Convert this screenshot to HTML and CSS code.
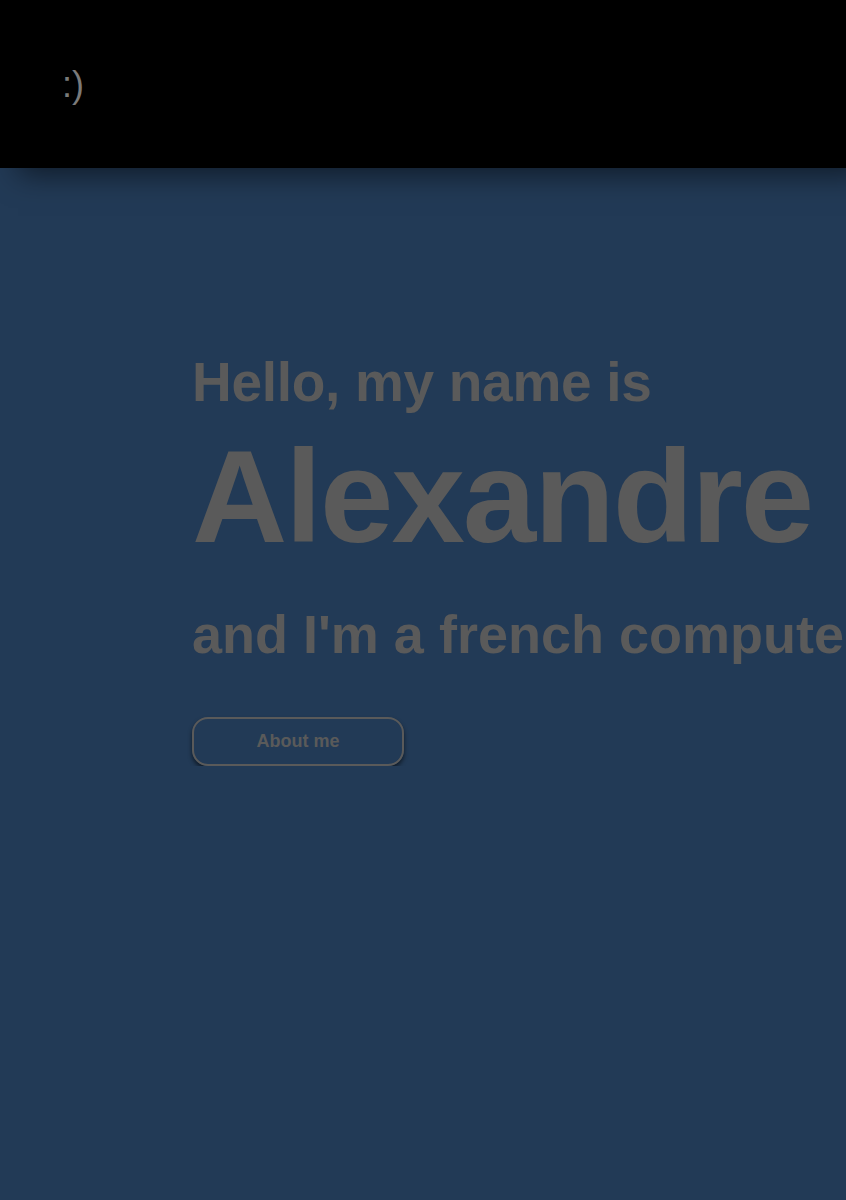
FILE: index.html
```html
<!DOCTYPE html>
<html lang="en">
<head>
<meta charset="utf-8">
<title>Alexandre</title>
<link rel="stylesheet" href="styles.css">
</head>
<body>
<header class="topbar">
  <span class="logo">:)</span>
</header>
<main class="hero">
  <h2 class="intro">Hello, my name is</h2>
  <h1 class="name">Alexandre</h1>
  <h2 class="role">and I'm a french computer science student</h2>
  <button class="about-btn" type="button">About me</button>
</main>
</body>
</html>
```
FILE: styles.css
```css
html, body {
  margin: 0;
  padding: 0;
}
body {
  background: #223a56;
  font-family: "Liberation Sans", Arial, sans-serif;
  color: #5a5a5a;
  overflow-x: hidden;
  min-height: 1200px;
}
.topbar {
  position: relative;
  z-index: 1;
  height: 168px;
  background: #000;
  display: flex;
  align-items: center;
  padding-left: 62px;
  box-shadow: 18px 6px 28px rgba(0, 0, 0, 0.55);
}
.logo {
  font-size: 36px;
  color: #7a7a7a;
  line-height: 1;
  margin-top: 2px;
}
.hero {
  padding: 187px 0 0 192px;
  display: flex;
  flex-direction: column;
  align-items: flex-start;
  overflow: hidden;
}
.intro, .name, .role {
  margin: 0;
  font-weight: bold;
  line-height: 1;
  white-space: nowrap;
}
.intro {
  font-size: 55px;
  letter-spacing: -0.3px;
}
.name {
  font-size: 132px;
  letter-spacing: -2px;
  margin-top: 21px;
}
.role {
  font-size: 54px;
  margin-top: 44px;
}
.about-btn {
  margin-top: 56px;
  width: 212px;
  height: 49px;
  border: 2px solid #5a5a5a;
  border-radius: 16px;
  background: transparent;
  color: #5a5a5a;
  font-family: "Liberation Sans", Arial, sans-serif;
  font-weight: bold;
  font-size: 18px;
  box-shadow: 0 3px 4px rgba(0, 0, 0, 0.55);
  cursor: pointer;
}
```
